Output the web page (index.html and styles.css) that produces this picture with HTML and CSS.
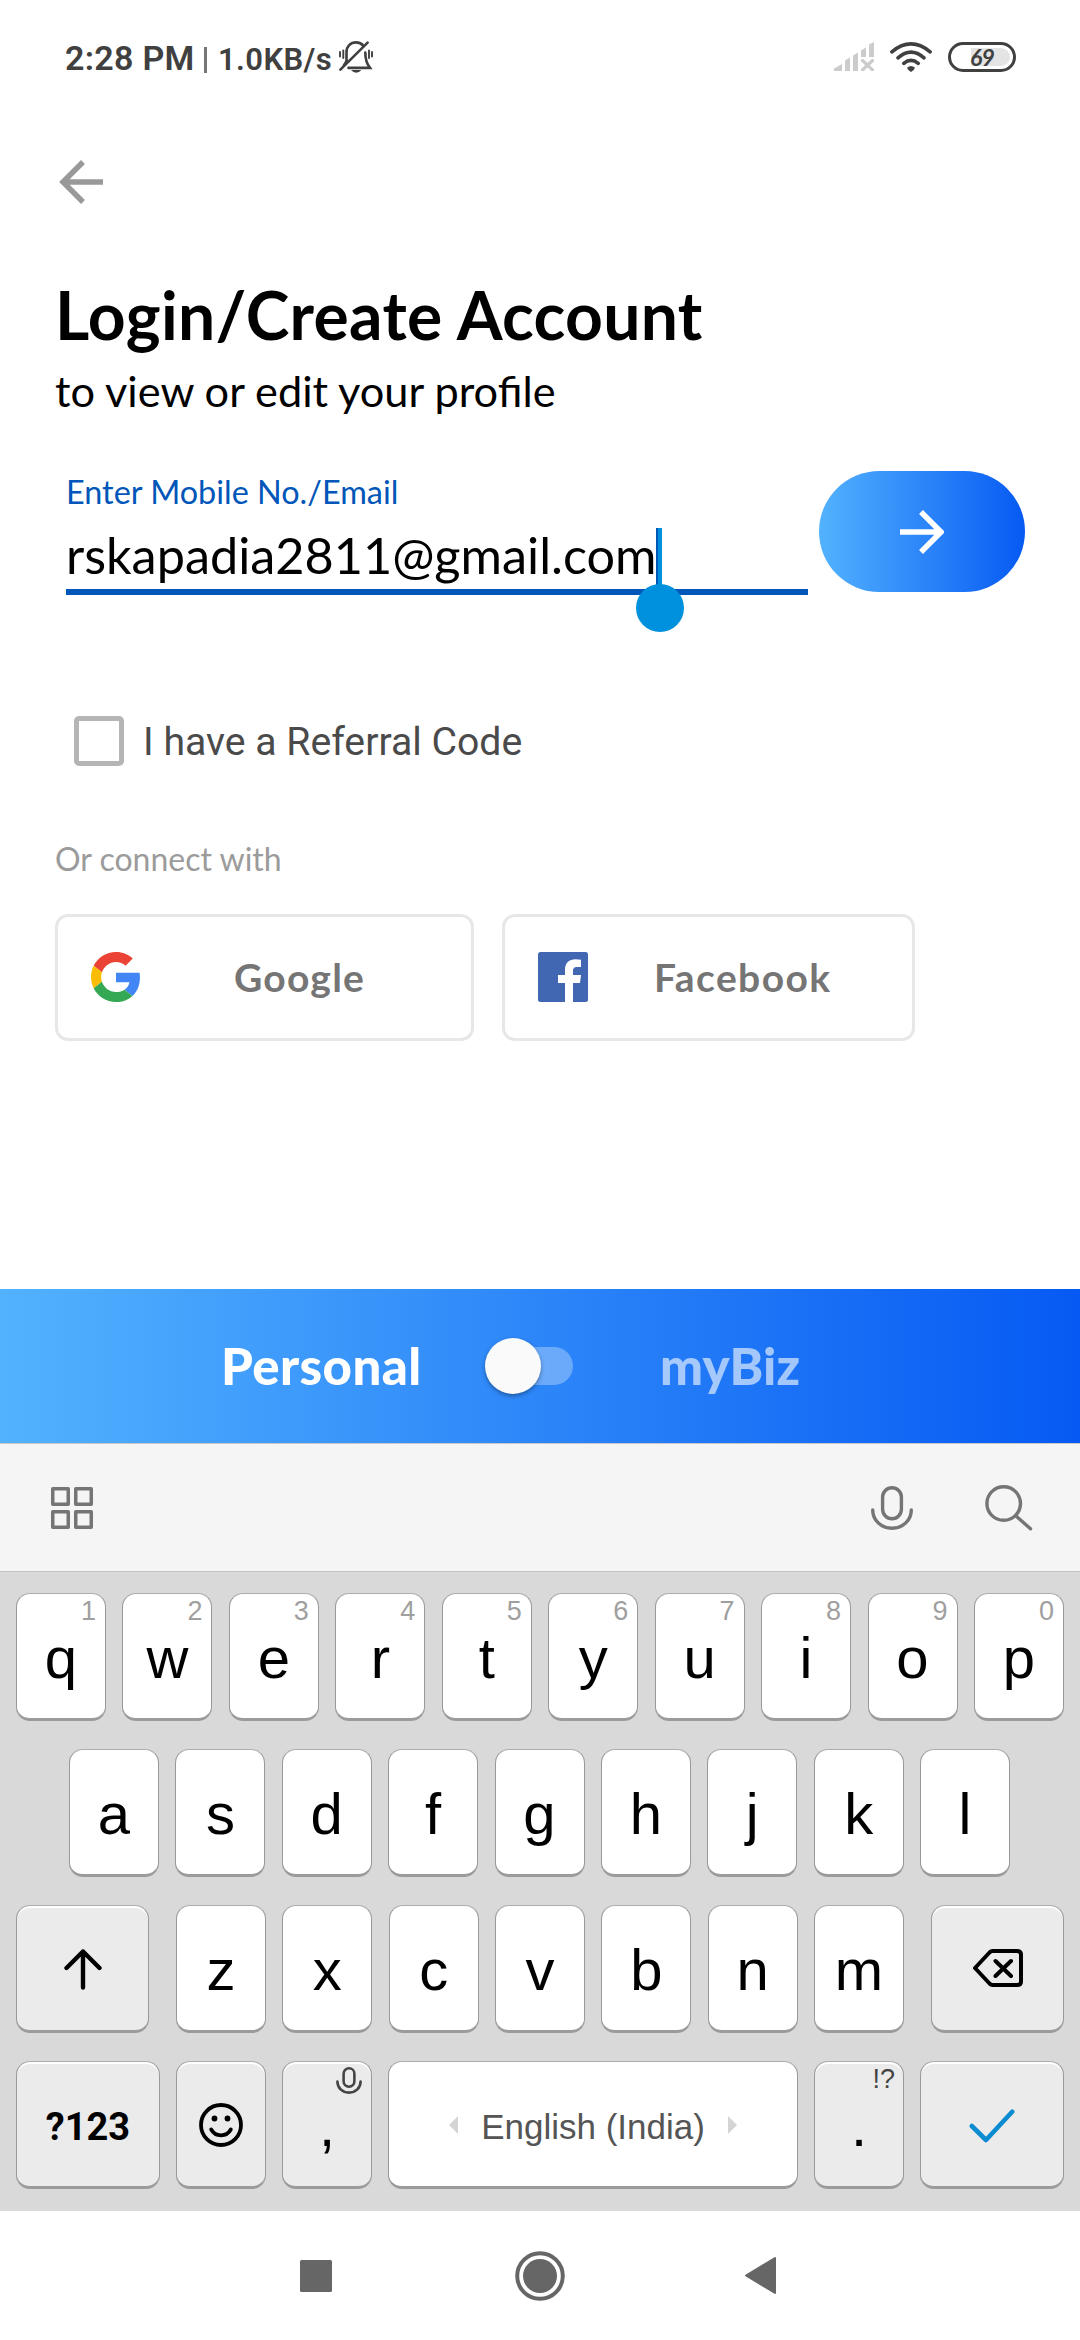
FILE: index.html
```html
<!DOCTYPE html>
<html lang="en">
<head>
<meta charset="utf-8">
<title>Login/Create Account</title>
<link rel="stylesheet" href="styles.css">
</head>
<body>
<div class="screen">
  <header class="status">
    <span class="clock">2:28 PM</span>
    <span class="divider"></span>
    <span class="speed">1.0KB/s</span>
    <svg class="bell" width="34" height="32" viewBox="0 0 34 32" fill="none" stroke="#404040" stroke-width="2.6" stroke-linecap="round">
      <path d="M7.5 19.5V11C7.5 5.500 11.500 1.400 17 1.400C20.200 1.400 22.600 2.600 24.200 4.600M26.300 11.500C26.300 19 27.500 22.500 31 26.900H9.500M1.400 28.600L28.600 1.600M7.500 19.500C7 21.500 6 23 4.800 24.600"/>
      <path d="M1 11V15.500M4.300 9.500V17M30 9.500V17M33 11V15.500" stroke-width="1.900"/>
      <path d="M12 29H22.500Q17.200 34.500 12 29Z" fill="#404040" stroke="none"/>
    </svg>
    <span class="spacer"></span>
    <svg class="signal" width="40" height="29" viewBox="0 0 40 29" fill="#ccc">
      <path d="M0 29V26.500L8 22V29ZM11 29V18.500L16 15.500V29ZM19 29V13.500L24 10.500V29ZM27 15V8.500L32 5.500V15ZM35 15V2.500L40 0V15Z"/>
      <path d="M28.500 18.500L38.500 28M38.500 18.500L28.500 28" stroke="#ccc" stroke-width="3.200" stroke-linecap="round"/>
    </svg>
    <svg class="wifi" width="42" height="30" viewBox="0 0 42 30" fill="none" stroke="#404040" stroke-width="3.600" stroke-linecap="round">
      <path d="M1.900 9.800Q21-6 40.100 9.800M8 15.900Q21 4.500 34 15.900M13.800 21.300Q21 15.400 28.200 21.300"/>
      <path d="M17 25.800Q21 22.200 25 25.800Q24.500 28 21 30Q17.500 28 17 25.800Z" fill="#404040" stroke="none"/>
    </svg>
    <span class="battery"><span class="charge"></span><span class="level">69</span></span>
  </header>

  <main class="content">
    <svg class="back" width="44" height="44" viewBox="0 0 44 44" fill="none" stroke="#999" stroke-width="5.500">
      <path d="M44 22H4M24 2L4 22L24 42"/>
    </svg>
    <h1 class="title">Login/Create Account</h1>
    <p class="subtitle">to view or edit your profile</p>

    <div class="form">
      <div class="field">
        <div class="label">Enter Mobile No./Email</div>
        <div class="value">rskapadia2811@gmail.com<span class="caret"></span></div>
      </div>
      <div class="submit">
        <svg width="44" height="44" viewBox="0 0 44 44" fill="none" stroke="#fff" stroke-width="5.500"><path d="M0 22H40M21 2L41 22L21 42"/></svg>
      </div>
    </div>

    <div class="referral"><span class="checkbox"></span><span>I have a Referral Code</span></div>

    <p class="connect">Or connect with</p>
    <div class="social">
      <div class="provider google">
        <svg width="50" height="50" viewBox="0 0 48 48">
          <path fill="#ea4335" d="M24 9.500c3.540 0 6.710 1.220 9.210 3.600l6.850-6.850C35.900 2.380 30.470 0 24 0 14.620 0 6.510 5.380 2.560 13.220l7.980 6.190C12.430 13.720 17.740 9.500 24 9.500z"/>
          <path fill="#4285f4" d="M46.980 24.550c0-1.570-.15-3.090-.38-4.550H24v9.020h12.940c-.58 2.960-2.260 5.480-4.780 7.180l7.730 6c4.510-4.180 7.090-10.360 7.090-17.650z"/>
          <path fill="#fbbc05" d="M10.530 28.590c-.48-1.450-.76-2.990-.76-4.590s.27-3.140.76-4.590l-7.980-6.190C.920 16.460 0 20.120 0 24c0 3.880.92 7.540 2.560 10.780l7.970-6.190z"/>
          <path fill="#34a853" d="M24 48c6.480 0 11.930-2.130 15.890-5.810l-7.730-6c-2.150 1.450-4.920 2.300-8.160 2.300-6.260 0-11.570-4.220-13.470-9.910l-7.980 6.190C6.510 42.620 14.620 48 24 48z"/>
        </svg>
        <span>Google</span>
      </div>
      <div class="provider facebook">
        <svg width="50" height="50" viewBox="0 0 50 50">
          <rect width="50" height="50" rx="2.500" fill="#4267b2"/>
          <path fill="#fff" d="M27 50V31H20V23H27V18C27 11 31 7.300 37.500 7.300Q41 7.300 43 7.700V15H39.500C36 15 35 16.500 35 19V23H43L42 31H35V50Z"/>
        </svg>
        <span>Facebook</span>
      </div>
    </div>
  </main>

  <div class="mode">
    <span class="personal">Personal</span>
    <span class="toggle"><span class="thumb"></span></span>
    <span class="mybiz">myBiz</span>
  </div>

  <div class="toolbar">
    <svg width="42" height="42" viewBox="0 0 42 42" fill="none" stroke="#757575" stroke-width="3.500" stroke-linejoin="round">
      <path d="M1.750 1.750H17.250V17.250H1.750ZM24.750 1.750H40.250V17.250H24.750ZM1.750 24.750H17.250V40.250H1.750ZM24.750 24.750H40.250V40.250H24.750Z"/>
    </svg>
    <span class="spacer"></span>
    <svg class="mic" width="42" height="44" viewBox="0 0 42 44" fill="none" stroke="#757575" stroke-width="3.400" stroke-linecap="round">
      <rect x="11.600" y="1.700" width="18.800" height="31" rx="9.400"/><path d="M1.700 24C1.700 34 10 42.300 21 42.300S40.300 34 40.300 24"/>
    </svg>
    <svg width="48" height="46" viewBox="0 0 48 46" fill="none" stroke="#757575" stroke-width="3.400" stroke-linecap="round">
      <circle cx="18.700" cy="18.500" r="16.800"/><path d="M31 31L45.500 43.800"/>
    </svg>
  </div>

  <div class="keyboard">
    <div class="row">
      <div class="key">q<span class="hint">1</span></div><div class="key">w<span class="hint">2</span></div><div class="key">e<span class="hint">3</span></div><div class="key">r<span class="hint">4</span></div><div class="key">t<span class="hint">5</span></div><div class="key">y<span class="hint">6</span></div><div class="key">u<span class="hint">7</span></div><div class="key">i<span class="hint">8</span></div><div class="key">o<span class="hint">9</span></div><div class="key">p<span class="hint">0</span></div>
    </div>
    <div class="row home">
      <div class="key">a</div><div class="key">s</div><div class="key">d</div><div class="key">f</div><div class="key">g</div><div class="key">h</div><div class="key">j</div><div class="key">k</div><div class="key">l</div>
    </div>
    <div class="row">
      <div class="key fn wide">
        <svg width="38" height="41" viewBox="0 0 38 41" fill="none" stroke="#000" stroke-width="4.400" stroke-linecap="round" stroke-linejoin="round"><path d="M19 38.500V2.500M2.500 19L19 2.500L35.500 19"/></svg>
      </div>
      <div class="letters">
        <div class="key">z</div><div class="key">x</div><div class="key">c</div><div class="key">v</div><div class="key">b</div><div class="key">n</div><div class="key">m</div>
      </div>
      <div class="key fn wide">
        <svg width="50" height="38" viewBox="0 0 50 38" fill="none" stroke="#000" stroke-width="4" stroke-linecap="round" stroke-linejoin="round"><path d="M19.500 2H44Q48 2 48 5.500V32.500Q48 36 44 36H19.500Q18 36 16.500 34.500L2 19L16.500 3.500Q18 2 19.500 2ZM22.500 12L38 27M38 12L22.500 27"/></svg>
      </div>
    </div>
    <div class="row">
      <div class="key fn side symbols">?123</div>
      <div class="key fn emoji">
        <svg width="44" height="44" viewBox="0 0 44 44" fill="none" stroke="#000" stroke-width="3.800" stroke-linecap="round"><circle cx="22" cy="22" r="20"/><path d="M12.200 26.500Q15.500 32.300 22 32.300T31.800 26.500"/><circle cx="15.500" cy="15.500" r="2.900" fill="#000" stroke="none"/><circle cx="28.500" cy="15.500" r="2.900" fill="#000" stroke="none"/></svg>
      </div>
      <div class="key fn comma">,
        <svg class="hint-mic" width="26" height="27" viewBox="0 0 42 44" fill="none" stroke="#444" stroke-width="4.200" stroke-linecap="round"><rect x="12.200" y="2.100" width="17.600" height="30" rx="8.800"/><path d="M2.100 23.500C2.100 34 10 41.700 21 41.700S39.900 34 39.900 23.500"/></svg>
      </div>
      <div class="key space">
        <svg width="9" height="18" viewBox="0 0 9 18"><path d="M9 0V18L0 9Z" fill="#d4d4d4"/></svg>
        <span>English (India)</span>
        <svg width="9" height="18" viewBox="0 0 9 18"><path d="M0 0V18L9 9Z" fill="#d4d4d4"/></svg>
      </div>
      <div class="key fn">.<span class="hint dark">!?</span></div>
      <div class="key fn side">
        <svg width="46" height="34" viewBox="0 0 46 34" fill="none" stroke="#0b8bd0" stroke-width="4.600" stroke-linecap="round" stroke-linejoin="round"><path d="M2.800 17L17 31L43.200 2.800"/></svg>
      </div>
    </div>
  </div>

  <nav class="nav">
    <svg width="32" height="32" viewBox="0 0 32 32"><rect width="32" height="32" rx="1.500" fill="#666"/></svg>
    <svg width="50" height="50" viewBox="0 0 50 50"><circle cx="25" cy="25" r="22.800" fill="none" stroke="#666" stroke-width="4"/><circle cx="25" cy="25" r="17" fill="#666"/></svg>
    <svg width="31" height="37" viewBox="0 0 31 37"><path d="M30 1V36L1 18.500Z" fill="#666" stroke="#666" stroke-width="2" stroke-linejoin="round"/></svg>
  </nav>
</div>
</body>
</html>
```
FILE: styles.css
```css
* { box-sizing: border-box; }
body { margin: 0; background: #fff; }
svg { display: block; flex: none; }
h1, p { margin: 0; }

.screen {
  width: 1080px;
  height: 2340px;
  display: flex;
  flex-direction: column;
  overflow: hidden;
  background: #fff;
  color: #000;
}
.spacer { flex: 1; }

/* Status bar */
.status {
  height: 114px;
  padding: 38px 64px 0 65px;
  display: flex;
  align-items: flex-start;
  font-family: Roboto, sans-serif;
  font-weight: 600;
  color: #404040;
  white-space: nowrap;
}
.clock { width: 139px; font-size: 34px; line-height: 41px; letter-spacing: 0.3px; }
.divider { width: 3px; height: 26px; margin: 9px 11px 0 0; background: #777; }
.speed { width: 121px; font-size: 31px; line-height: 43px; letter-spacing: 0.4px; }
.bell { margin-top: 3px; }
.signal { margin-top: 4px; }
.wifi { margin: 4px 16px 0; }
.battery {
  position: relative;
  width: 68px;
  height: 30px;
  margin-top: 4px;
  border: 3px solid #404040;
  border-radius: 15px;
}
.charge {
  position: absolute;
  left: 20px;
  top: 3px;
  width: 39px;
  height: 18px;
  border-radius: 0 9px 9px 0;
  background: #e4e4e4;
}
.level {
  position: relative;
  display: block;
  margin-left: 19px;
  font: italic 700 23px/25px Lato, sans-serif;
  letter-spacing: -0.7px;
}

/* Login form */
.content { height: 1175px; padding: 46px 55px 0; font-family: Lato, sans-serif; }
.back { margin-left: 4px; }
.title {
  margin-top: 71px;
  font-size: 66px;
  line-height: 80px;
  font-weight: 700;
  letter-spacing: 0.3px;
}
.subtitle { margin-top: 8px; font-size: 43.3px; line-height: 54px; }
.form { display: flex; gap: 11px; margin: 54px 0 0 11px; }
.field {
  width: 742px;
  height: 124px;
  border-bottom: 6px solid #0056b9;
}
.label { padding-top: 1px; font-size: 32.4px; line-height: 40px; color: #0056b9; }
.value {
  display: flex;
  margin-top: 13px;
  font-size: 50.4px;
  line-height: 60px;
}
.caret {
  position: relative;
  width: 6px;
  height: 58px;
  margin: 3px 0 0 -1px;
  background: linear-gradient(90deg, #0056b9 2px, #0091de 2px);
}
.caret::after {
  content: "";
  position: absolute;
  left: -20px;
  top: 56px;
  width: 48px;
  height: 48px;
  border-radius: 50%;
  background: #0091de;
}
.submit {
  width: 206px;
  height: 121px;
  border-radius: 61px;
  display: flex;
  align-items: center;
  justify-content: center;
  padding-right: 1px;
  background: linear-gradient(90deg, #53b2fe, #065af3);
}
.referral {
  display: flex;
  align-items: center;
  gap: 19px;
  height: 50px;
  margin: 121px 0 0 19px;
  font: 400 39.2px/50px Roboto, sans-serif;
  color: #4a4a4a;
}
.referral span:last-child { padding-top: 2px; }
.checkbox { width: 50px; height: 50px; border: 5.5px solid #b5b5b5; border-radius: 5px; }
.connect { margin-top: 73px; font-size: 32px; line-height: 40px; color: #9b9b9b; }
.social { display: flex; gap: 28px; margin-top: 35px; }
.provider {
  height: 127px;
  padding-left: 33px;
  border: 3px solid #e7e7e7;
  border-radius: 13px;
  display: flex;
  align-items: center;
  font-size: 39px;
  line-height: 121px;
  font-weight: 700;
  letter-spacing: 1.2px;
  color: #757575;
}
.google { width: 419px; gap: 93px; }
.facebook { width: 413px; gap: 66px; letter-spacing: 1.4px; }
.provider svg { margin-bottom: 1px; }

/* Account type switch */
.mode {
  height: 154px;
  display: flex;
  align-items: flex-start;
  padding: 46px 0 0 221px;
  background: linear-gradient(90deg, #53b2fe, #065af3);
  font: 900 51px/62px Lato, sans-serif;
  color: #fff;
}
.personal { width: 264px; letter-spacing: 0.4px; }
.toggle {
  width: 84px;
  height: 38px;
  margin: 12px 87px 0 4px;
  border-radius: 19px;
  background: rgba(255, 255, 255, 0.3);
}
.thumb {
  display: block;
  width: 56px;
  height: 56px;
  margin: -9px 0 0 -4px;
  border-radius: 50%;
  background: #fafafa;
  box-shadow: 0 2px 4px rgba(0, 0, 0, 0.35);
}
.mybiz { color: rgba(255, 255, 255, 0.6); letter-spacing: 0.2px; }

/* Keyboard */
.toolbar {
  height: 129px;
  display: flex;
  align-items: center;
  padding: 0 47px 0 51px;
  border-top: 1px solid #c8c8c8;
  border-bottom: 1px solid #c3c3c3;
  background: #f5f5f5;
}
.mic { margin-right: 72px; }
.keyboard {
  height: 639px;
  padding: 21px 16px;
  display: flex;
  flex-direction: column;
  gap: 28px;
  background: #d9d9d9;
  font-family: "Liberation Sans", sans-serif;
}
.row, .letters { display: flex; justify-content: space-between; }
.home { padding: 0 54px 0 53px; }
.letters { width: 728px; }
.key {
  position: relative;
  width: 90px;
  height: 128px;
  border: 1px solid #999;
  border-top-color: #adadad;
  border-bottom: 3px solid #9b9b9b;
  border-radius: 14px;
  background: #fff;
  font-size: 58px;
  line-height: 128px;
  text-align: center;
}
.key > svg { position: relative; margin: 43px auto 0; }
.fn { background: #ebebeb; box-shadow: inset 0 2px 0 #fff; }
.wide { width: 133px; }
.side { width: 144px; }
.symbols { font: 700 38px/131px Roboto, sans-serif; }
.hint {
  position: absolute;
  top: 1px;
  right: 9px;
  font-size: 27px;
  line-height: 32px;
  color: #9f9f9f;
}
.hint.dark { right: 8px; color: #444; }
.key > .hint-mic { position: absolute; top: 5px; right: 9px; margin: 0; }
.emoji > svg { margin-top: 41px; }
.side > svg { margin-top: 47px; }
.space {
  width: 410px;
  display: flex;
  justify-content: center;
  gap: 23px;
  font-size: 35px;
  line-height: 130px;
  color: #555;
}
.space > svg { margin: 54px 0 0; }

/* System navigation */
.nav {
  height: 129px;
  display: flex;
  align-items: center;
  padding-left: 300px;
}
.nav svg:nth-child(2) { margin: 0 180px 0 183px; }
```
